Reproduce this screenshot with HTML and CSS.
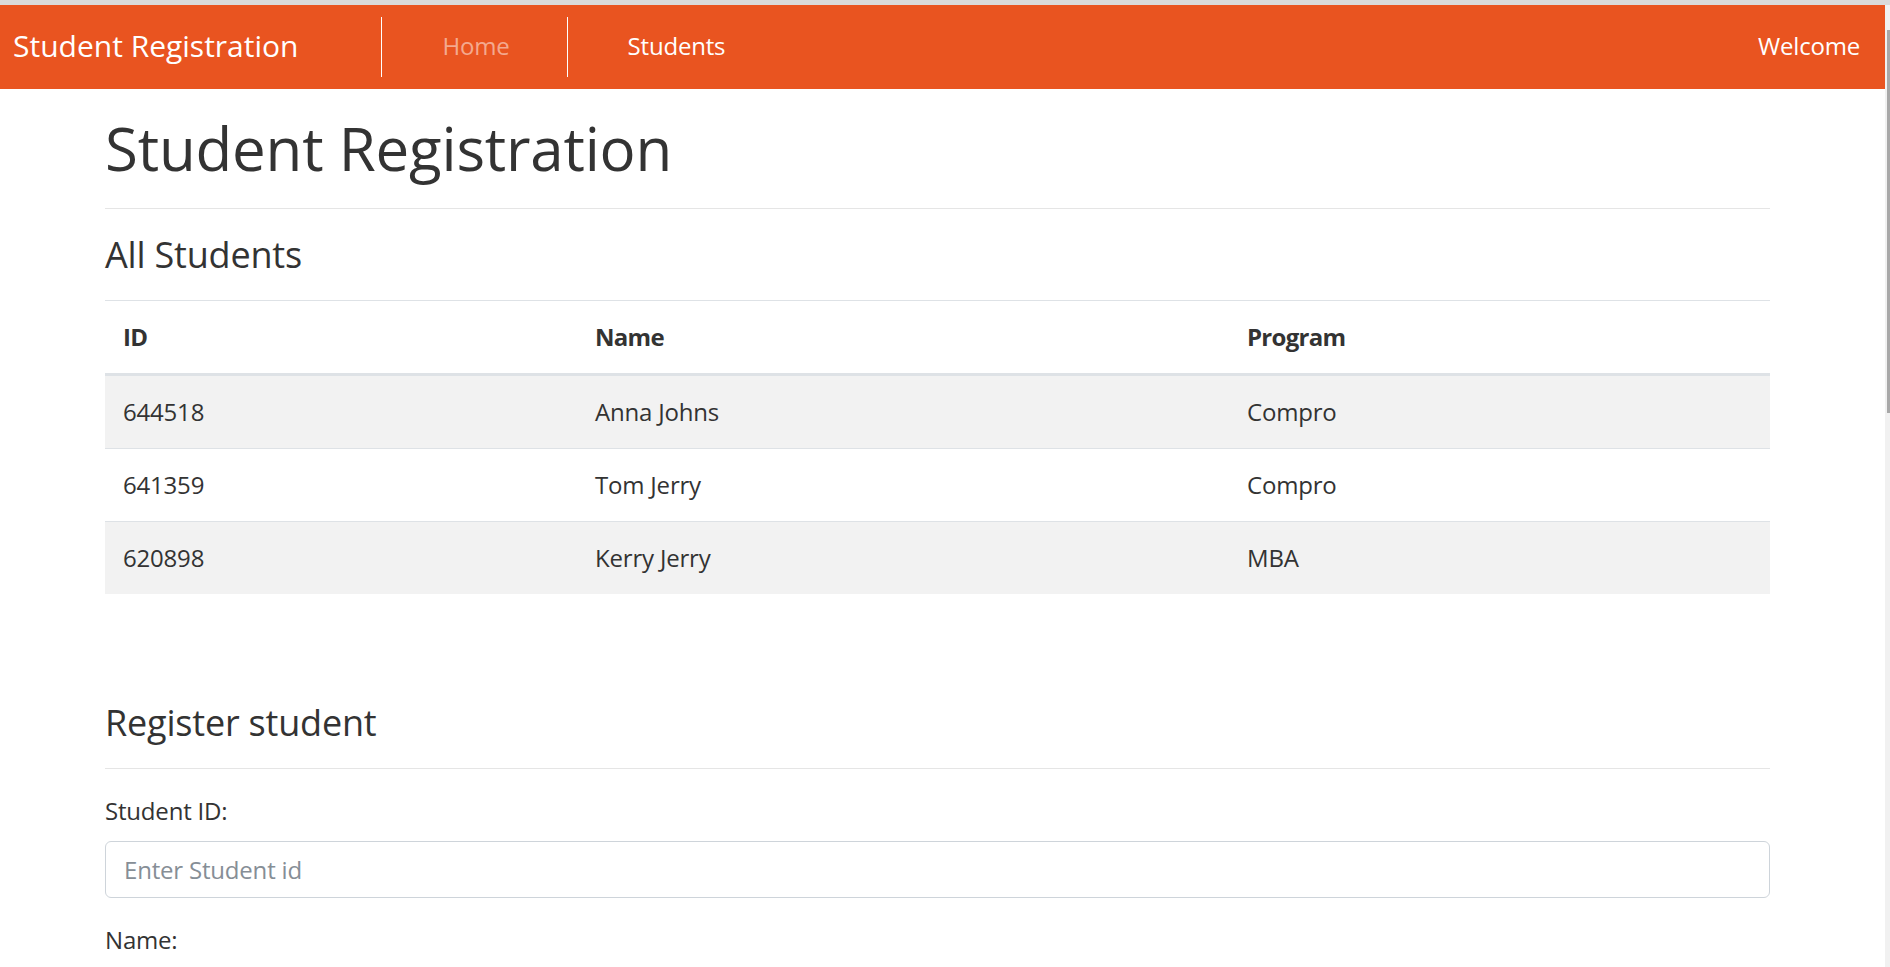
FILE: index.html
```html
<!DOCTYPE html>
<html lang="en">
<head>
<meta charset="utf-8">
<title>Student Registration</title>
<link rel="stylesheet" href="styles.css">
</head>
<body>
<div class="chrome-top"></div>
<div class="frame">
  <div class="page">
    <nav class="navbar">
      <a class="brand" href="#">Student Registration</a>
      <ul class="nav-links">
        <li><a class="nav-link muted" href="#">Home</a></li>
        <li><a class="nav-link active" href="#">Students</a></li>
      </ul>
      <span class="welcome">Welcome</span>
    </nav>
    <main class="container">
      <h1 class="page-title">Student Registration</h1>
      <hr class="rule">
      <h4 class="section-title">All Students</h4>
      <table class="table">
        <colgroup>
          <col class="col-id">
          <col class="col-name">
          <col class="col-program">
        </colgroup>
        <thead>
          <tr><th>ID</th><th>Name</th><th>Program</th></tr>
        </thead>
        <tbody>
          <tr class="striped"><td>644518</td><td>Anna Johns</td><td>Compro</td></tr>
          <tr><td>641359</td><td>Tom Jerry</td><td>Compro</td></tr>
          <tr class="striped"><td>620898</td><td>Kerry Jerry</td><td>MBA</td></tr>
        </tbody>
      </table>
      <section class="register">
        <h4 class="section-title tight">Register student</h4>
        <hr class="rule">
        <form class="form">
          <div class="form-group">
            <label class="form-label" for="sid">Student ID:</label>
            <input class="form-control" id="sid" type="text" placeholder="Enter Student id">
          </div>
          <div class="form-group">
            <label class="form-label" for="sname">Name:</label>
            <input class="form-control" id="sname" type="text" placeholder="Enter Name">
          </div>
          <div class="form-group">
            <label class="form-label" for="sprog">Program:</label>
            <input class="form-control" id="sprog" type="text" placeholder="Enter Program">
          </div>
        </form>
      </section>
    </main>
  </div>
  <div class="scrollbar"><div class="thumb"></div></div>
</div>
</body>
</html>
```
FILE: styles.css
```css
html, body {
  margin: 0;
  padding: 0;
  height: 967px;
  overflow: hidden;
  background: #fff;
}

body {
  font-family: "Open Sans", "Noto Sans", "DejaVu Sans", sans-serif;
  font-size: 24px;
  line-height: 1.5;
  color: #333;
  letter-spacing: -0.008em;
}

.chrome-top {
  height: 5px;
  background: #dadada;
}

.frame {
  display: flex;
  height: 962px;
  overflow: hidden;
}

.page {
  flex: 1;
  min-width: 0;
  overflow: hidden;
}

.scrollbar {
  width: 5px;
  background: #f1f1f1;
  padding-top: 25px;
  box-sizing: border-box;
}

.thumb {
  margin-left: 2px;
  width: 3px;
  height: 383px;
  background: #a8a8a8;
}

/* NAVBAR */
.navbar {
  display: flex;
  align-items: center;
  height: 84px;
  padding: 0 25px 0 13px;
  background: #e95420;
  box-sizing: border-box;
}

.brand {
  display: block;
  font-size: 30px;
  line-height: 45px;
  padding: 6px 0 9px;
  color: #fff;
  text-decoration: none;
  letter-spacing: 0;
  margin-right: 83px;
}

.nav-links {
  display: flex;
  list-style: none;
  margin: 0;
  padding: 0;
}

.nav-link {
  display: block;
  padding: 11px 57px 13px 60px;
  line-height: 36px;
  border-left: 1px solid #fff;
  text-decoration: none;
  color: #fff;
}

.nav-link.muted {
  color: rgba(255, 255, 255, 0.5);
}

.welcome {
  margin-left: auto;
  color: #fff;
  line-height: 36px;
  padding: 11px 0 13px;
}

/* CONTENT */
.container {
  width: 1665px;
  margin-left: 105px;
  padding-top: 23px;
}

.page-title {
  font-size: 60px;
  font-weight: 400;
  line-height: 1.2;
  margin: 0 0 12px;
}

.rule {
  border: 0;
  border-top: 1px solid #e5e5e5;
  margin: 24px 0;
  height: 0;
}

.section-title {
  font-size: 36px;
  font-weight: 400;
  line-height: 1.2;
  margin: 0 0 24px;
}

.section-title.tight {
  margin-bottom: 12px;
}

/* TABLE */
.table {
  width: 100%;
  table-layout: fixed;
  border-collapse: collapse;
  margin: 0;
}

.col-id { width: 472px; }
.col-name { width: 652px; }
.col-program { width: 541px; }

.table th,
.table td {
  text-align: left;
  padding: 18px;
  line-height: 36px;
  vertical-align: top;
}

.table th {
  font-weight: 700;
  letter-spacing: -0.03em;
  border-top: 1px solid #dee2e6;
  border-bottom: 3px solid #dee2e6;
}

.table tbody tr + tr td {
  border-top: 1px solid #dee2e6;
}

.table tr.striped td {
  background: #f2f2f2;
}

/* FORM */
.register {
  margin-top: 107px;
}

.form-group {
  margin-bottom: 24px;
}

.form-label {
  display: block;
  margin-bottom: 12px;
  line-height: 36px;
}

.form-control {
  display: block;
  width: 100%;
  height: 57px;
  box-sizing: border-box;
  padding: 0 18px;
  font-family: inherit;
  font-size: 24px;
  letter-spacing: -0.008em;
  color: #333;
  background: #fff;
  border: 1px solid #ced4da;
  border-radius: 6px;
  outline: none;
}

.form-control::placeholder {
  color: #868e96;
  opacity: 1;
}
```
